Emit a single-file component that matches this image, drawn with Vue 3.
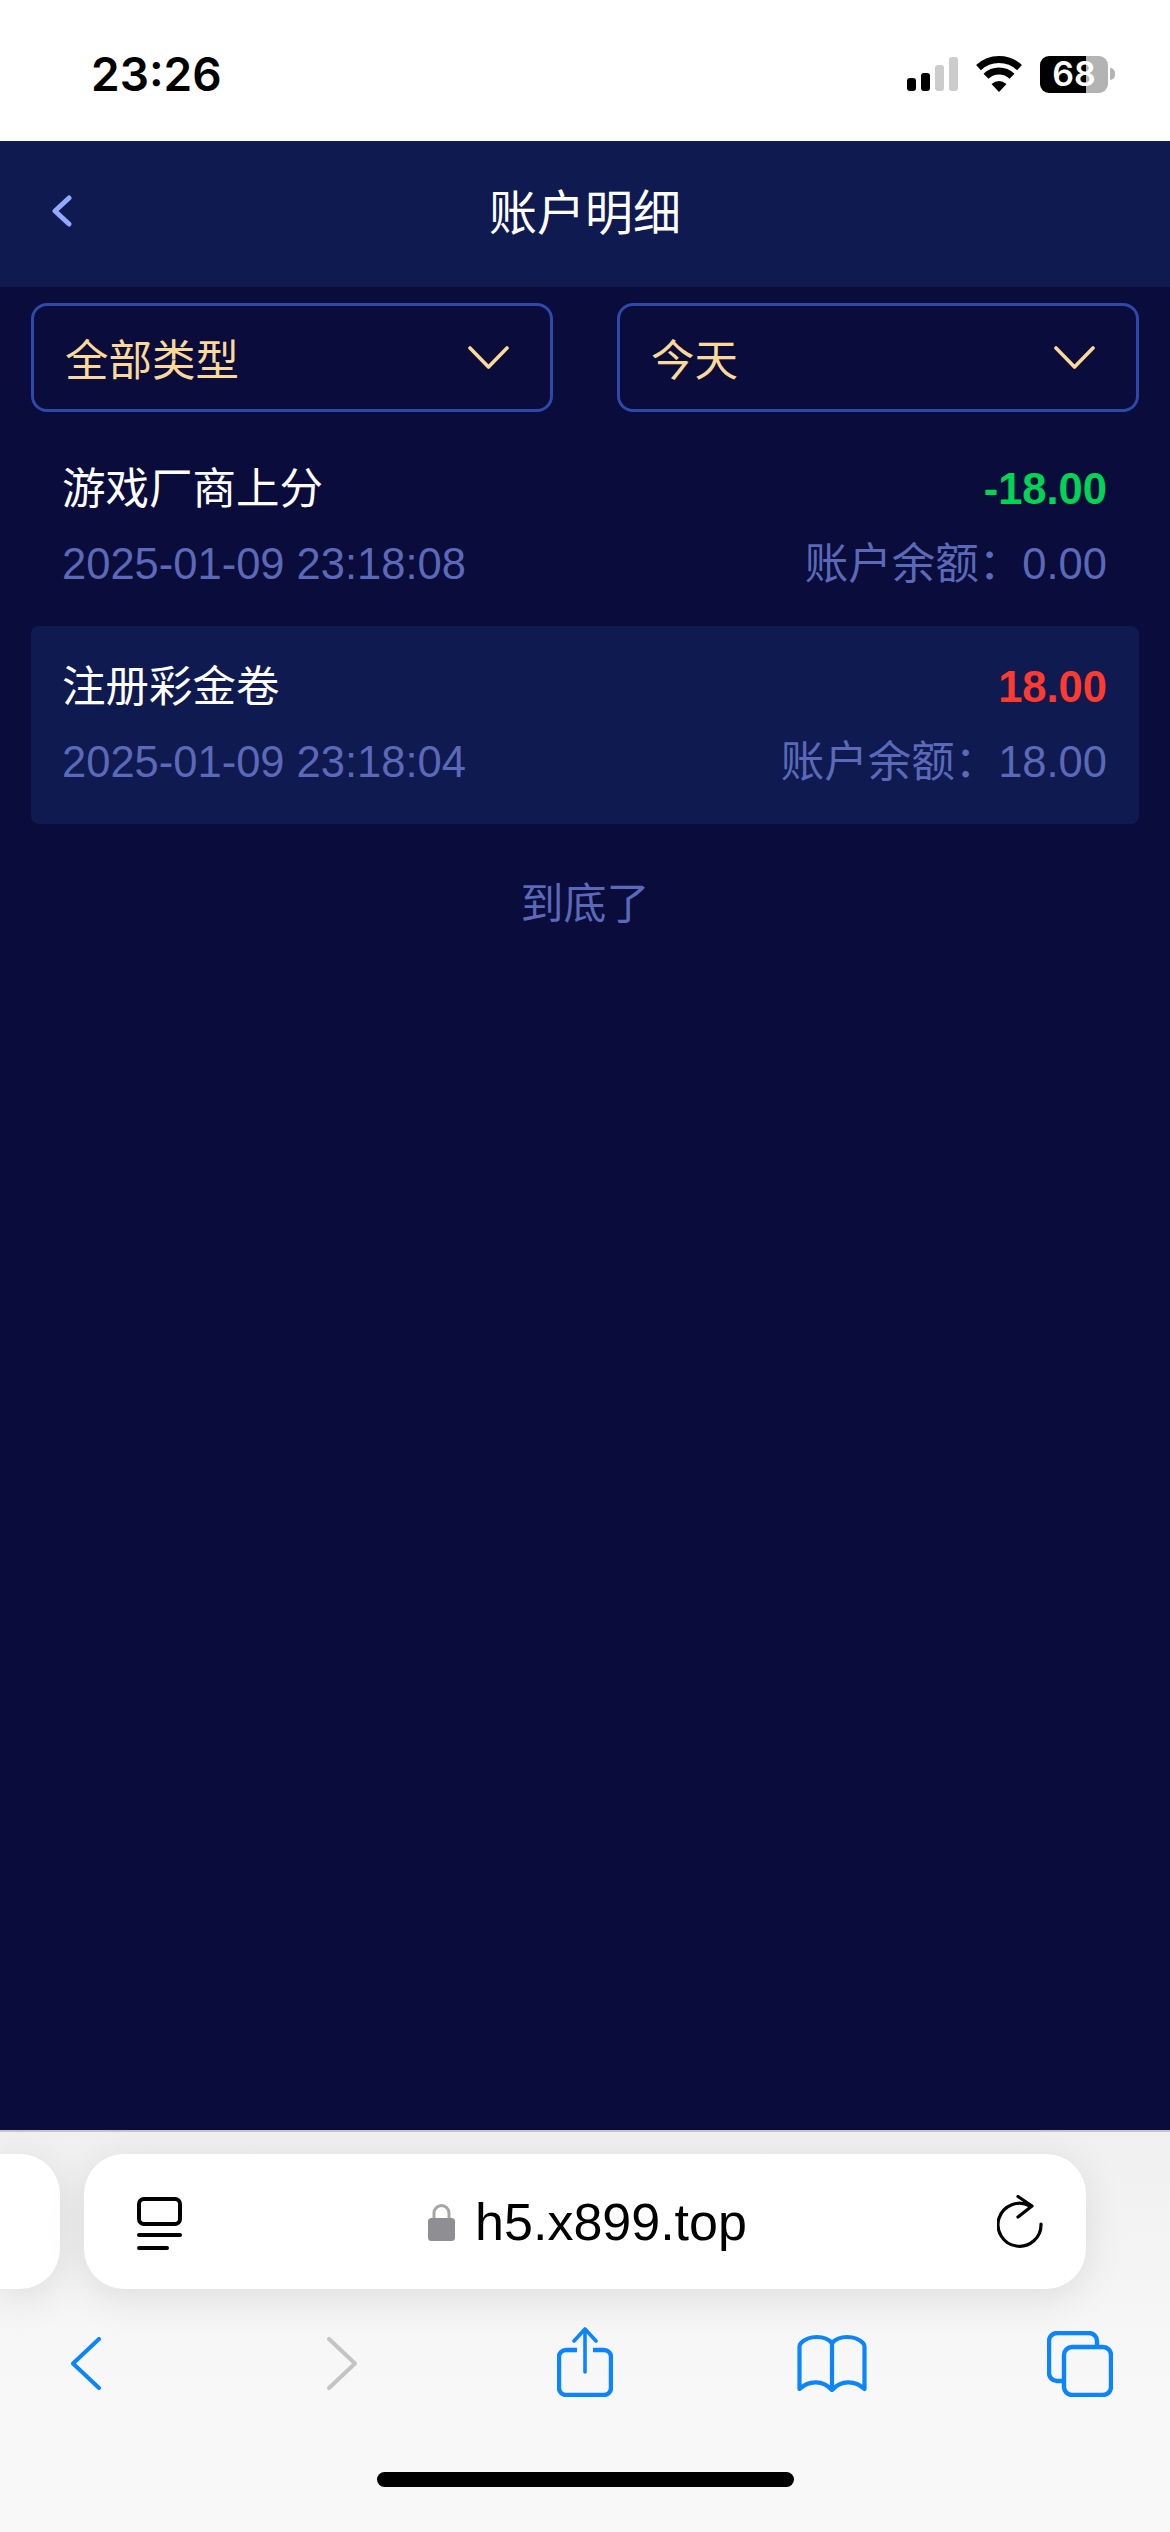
<script setup>
import { ref } from 'vue';

const filters = ref([
  { key: 'type', label: '全部类型' },
  { key: 'date', label: '今天' }
]);

const records = ref([
  { id: 1, title: '游戏厂商上分', amount: '-18.00', time: '2025-01-09 23:18:08', balance: '0.00', out: true },
  { id: 2, title: '注册彩金卷', amount: '18.00', time: '2025-01-09 23:18:04', balance: '18.00', out: false }
]);
</script>

<template>
  <div class="screen">
    <div class="status-bar">
      <span class="clock">23:26</span>
      <div class="status-icons">
        <div class="signal">
          <i class="bar bar-1"></i>
          <i class="bar bar-2"></i>
          <i class="bar bar-3"></i>
          <i class="bar bar-4"></i>
        </div>
        <svg class="wifi" viewBox="0 0 48 36" aria-hidden="true">
          <path d="M3.5 11.6A30 30 0 0 1 44.5 11.6" fill="none" stroke="#000" stroke-width="7" />
          <path d="M11 20.3A18.5 18.5 0 0 1 37 20.3" fill="none" stroke="#000" stroke-width="7" />
          <path d="M24 36L16.5 28Q24 22 31.5 28Z" fill="#000" />
        </svg>
        <div class="battery">
          <span class="battery-level">68</span>
        </div>
        <i class="battery-nub"></i>
      </div>
    </div>

    <header class="nav">
      <svg class="nav-back" viewBox="0 0 20 32" aria-hidden="true">
        <path d="M17 3L3 16L17 29" fill="none" stroke="#93a8ff" stroke-width="5" stroke-linecap="round" stroke-linejoin="round" />
      </svg>
      <h1 class="nav-title">账户明细</h1>
    </header>

    <main class="content">
      <div class="filters">
        <div v-for="item in filters" :key="item.key" class="select">
          <span>{{ item.label }}</span>
          <svg class="select-arrow" viewBox="0 0 41 23" aria-hidden="true">
            <path d="M2 2L20.5 21L39 2" fill="none" stroke="#fbd998" stroke-width="3.6" stroke-linecap="round" stroke-linejoin="round" />
          </svg>
        </div>
      </div>

      <ul class="records">
        <li v-for="row in records" :key="row.id" class="record">
          <div class="record-line">
            <span class="record-title">{{ row.title }}</span>
            <span class="record-amount" :class="row.out ? 'is-out' : 'is-in'">{{ row.amount }}</span>
          </div>
          <div class="record-line record-meta">
            <span>{{ row.time }}</span>
            <span>账户余额：{{ row.balance }}</span>
          </div>
        </li>
      </ul>

      <p class="list-end">到底了</p>
    </main>

    <footer class="safari">
      <div class="tabs-row">
        <div class="pill-prev"></div>
        <div class="pill-url">
          <svg class="page-icon" viewBox="0 0 45 55" aria-hidden="true">
            <rect x="2" y="2" width="41" height="25" rx="5" fill="none" stroke="#000" stroke-width="4" />
            <path d="M2 38H43M2 51H30" fill="none" stroke="#000" stroke-width="4" stroke-linecap="round" />
          </svg>
          <div class="address">
            <svg class="lock" viewBox="0 0 27 38" aria-hidden="true">
              <path d="M6 16V10a7.500 7.500 0 0 1 15 0V16" fill="none" stroke="#a5a5a9" stroke-width="3" />
              <rect y="15" width="27" height="23" rx="3.500" fill="#8e8e93" />
            </svg>
            <span class="host">h5.x899.top</span>
          </div>
          <svg class="reload" viewBox="0 0 46 53" aria-hidden="true">
            <path d="M44 29A21.500 21.500 0 1 1 33 11" fill="none" stroke="#000" stroke-width="3.200" stroke-linecap="round" />
            <path d="M21 1.500L35 11L21 22" fill="none" stroke="#000" stroke-width="3.200" stroke-linecap="round" stroke-linejoin="round" />
          </svg>
        </div>
      </div>

      <nav class="toolbar">
        <svg class="tool tool-back" viewBox="0 0 30 53" aria-hidden="true">
          <path d="M28 2L2 26.500L28 51" fill="none" stroke="#0a84ff" stroke-width="4" stroke-linecap="round" stroke-linejoin="round" />
        </svg>
        <svg class="tool tool-forward" viewBox="0 0 30 53" aria-hidden="true">
          <path d="M2 2L28 26.500L2 51" fill="none" stroke="#c4c4c6" stroke-width="4" stroke-linecap="round" stroke-linejoin="round" />
        </svg>
        <svg class="tool tool-share" viewBox="0 0 56 70" aria-hidden="true">
          <path d="M20 23H9a7 7 0 0 0-7 7V61a7 7 0 0 0 7 7H47a7 7 0 0 0 7-7V30a7 7 0 0 0-7-7H36" fill="none" stroke="#0a84ff" stroke-width="4.400" />
          <path d="M28 45V3M17 14L28 2L39 14" fill="none" stroke="#0a84ff" stroke-width="3.600" stroke-linecap="round" stroke-linejoin="round" />
        </svg>
        <svg class="tool tool-book" viewBox="0 0 70 58" aria-hidden="true">
          <path d="M35 9C28 1 12 1 4 9C3 10 2.500 11 2.500 13V55C12 46 26 46 35 56C44 46 58 46 67.500 55V13C67.500 11 67 10 66 9C58 1 42 1 35 9Z" fill="none" stroke="#0a84ff" stroke-width="4.200" stroke-linejoin="round" />
          <path d="M35 9V56" fill="none" stroke="#0a84ff" stroke-width="4.200" />
        </svg>
        <svg class="tool tool-tabs" viewBox="0 0 66 66" aria-hidden="true">
          <path d="M50 15V10a8 8 0 0 0-8-8H10a8 8 0 0 0-8 8V42a8 8 0 0 0 8 8H15" fill="none" stroke="#0a84ff" stroke-width="4.400" />
          <rect x="17" y="16" width="47" height="48" rx="8" fill="none" stroke="#0a84ff" stroke-width="4.400" />
        </svg>
      </nav>

      <div class="home-indicator"></div>
    </footer>
  </div>
</template>

<style scoped>
.screen {
  display: flex;
  flex-direction: column;
  width: 1170px;
  height: 2532px;
  overflow: hidden;
  background: #0a0c3b;
  font-family: "Liberation Sans", "Noto Sans CJK SC", sans-serif;
}

.status-bar {
  display: flex;
  align-items: center;
  justify-content: space-between;
  flex: 0 0 141px;
  padding: 7px 55px 0 91px;
  box-sizing: border-box;
  background: #ffffff;
}

.clock {
  color: #000000;
  font-family: Inter, "Liberation Sans", sans-serif;
  font-size: 46px;
  font-weight: 600;
  line-height: 1;
}

.status-icons {
  display: flex;
  align-items: center;
}

.signal {
  display: flex;
  align-items: flex-end;
  gap: 5px;
  height: 34px;
}

.bar {
  display: block;
  width: 9px;
  border-radius: 3px;
  background: #cccccc;
}

.bar-1 {
  height: 13px;
  background: #000000;
}

.bar-2 {
  height: 18px;
  background: #000000;
}

.bar-3 {
  height: 26px;
}

.bar-4 {
  height: 34px;
}

.wifi {
  width: 48px;
  height: 36px;
  margin-left: 17px;
}

.battery {
  display: flex;
  align-items: center;
  justify-content: center;
  width: 68px;
  height: 37px;
  margin-left: 17px;
  border-radius: 9px;
  background: linear-gradient(90deg, #000000 46px, #b3b3b3 46px);
}

.battery-level {
  color: #ffffff;
  font-family: Inter, "Liberation Sans", sans-serif;
  font-size: 34px;
  font-weight: 600;
  line-height: 1;
}

.battery-nub {
  display: block;
  width: 5px;
  height: 12px;
  margin-left: 2px;
  border-radius: 0 6px 6px 0;
  background: #b3b3b3;
}

.nav {
  position: relative;
  display: flex;
  align-items: center;
  justify-content: center;
  flex: 0 0 146px;
  background: #0f1a50;
}

.nav-back {
  position: absolute;
  top: 54px;
  left: 52px;
  width: 20px;
  height: 32px;
}

.nav-title {
  margin: 0;
  color: #ffffff;
  font-size: 48px;
  font-weight: 400;
  line-height: 1;
}

.content {
  flex: 1;
  padding: 16px 31px 0;
}

.filters {
  display: flex;
  justify-content: space-between;
}

.select {
  display: flex;
  align-items: center;
  justify-content: space-between;
  box-sizing: border-box;
  width: 522px;
  height: 109px;
  padding: 0 41px 0 31px;
  border: 3px solid #2f49ab;
  border-radius: 16px;
  color: #fbd998;
  font-size: 43.5px;
}

.select-arrow {
  width: 41px;
  height: 23px;
}

.records {
  margin: 16px 0 0;
  padding: 0;
  list-style: none;
}

.record {
  display: flex;
  flex-direction: column;
  gap: 31px;
  box-sizing: border-box;
  height: 198px;
  padding: 39px 32px 0 31px;
  border-radius: 8px;
}

.record:nth-child(even) {
  background: #0f1a50;
}

.record-line {
  display: flex;
  align-items: center;
  justify-content: space-between;
  height: 44px;
  font-size: 43.5px;
  line-height: 44px;
}

.record-title {
  color: #ffffff;
}

.record-amount {
  font-weight: 700;
}

.is-out {
  color: #00d455;
}

.is-in {
  color: #ff3b30;
}

.record-meta {
  color: #5b69b8;
}

.list-end {
  margin: 58px 0 0;
  color: #5b69b8;
  font-size: 43px;
  line-height: 44px;
  text-align: center;
}

.safari {
  flex: 0 0 402px;
  box-sizing: border-box;
  border-top: 2px solid #c6c6c8;
  background: #f7f7f7;
  background-image: linear-gradient(180deg, #f0f0f0 0, #f8f8f8 260px);
}

.tabs-row {
  display: flex;
  gap: 24px;
  padding-top: 22px;
}

.pill-prev {
  flex: 0 0 60px;
  height: 135px;
  border-radius: 0 40px 40px 0;
  background: #ffffff;
  box-shadow: 0 8px 40px rgba(0, 0, 0, 0.1);
}

.pill-url {
  display: flex;
  align-items: center;
  justify-content: space-between;
  box-sizing: border-box;
  flex: 0 0 1002px;
  height: 135px;
  padding: 0 43px 0 53px;
  border-radius: 40px;
  background: #ffffff;
  box-shadow: 0 8px 40px rgba(0, 0, 0, 0.1);
}

.page-icon {
  width: 45px;
  height: 55px;
  margin-top: 6px;
}

.address {
  display: flex;
  align-items: center;
  gap: 20px;
  margin-left: -4px;
}

.lock {
  width: 27px;
  height: 38px;
}

.host {
  color: #000000;
  font-size: 52px;
  line-height: 52px;
}

.reload {
  width: 46px;
  height: 53px;
}

.toolbar {
  display: flex;
  align-items: flex-start;
  height: 108px;
  padding: 38px 0 0 71px;
}

.tool {
  flex: none;
}

.tool-back,
.tool-forward {
  width: 30px;
  height: 53px;
  margin-top: 10px;
}

.tool-forward {
  margin-left: 226px;
}

.tool-share {
  width: 56px;
  height: 70px;
  margin-left: 200px;
}

.tool-book {
  width: 70px;
  height: 58px;
  margin-top: 7px;
  margin-left: 184px;
}

.tool-tabs {
  width: 66px;
  height: 66px;
  margin-top: 4px;
  margin-left: 180px;
}

.home-indicator {
  width: 417px;
  height: 15px;
  margin: 37px auto 0;
  border-radius: 8px;
  background: #000000;
}
</style>

<style>
html,
body {
  margin: 0;
  background: #0a0c3b;
}
</style>
